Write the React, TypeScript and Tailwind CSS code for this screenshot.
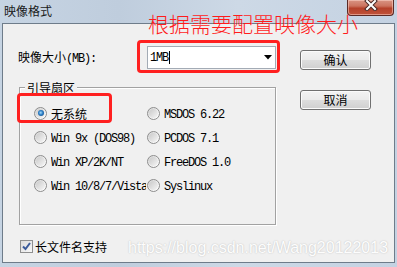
import React from "react";

function T({ s }: { s: string }) {
  const parts = s.match(/[\x00-\x7f]+|[^\x00-\x7f]+/g) || [];
  return (
    <>
      {parts.map((p, i) =>
        /^[\x00-\x7f]/.test(p) ? (
          <span key={i} className="font-['Liberation_Mono'] text-[12px] tracking-[-1.2px] whitespace-pre">
            {p}
          </span>
        ) : (
          <span key={i} className="font-['Noto_Sans_CJK_SC'] text-[12px]">
            {p}
          </span>
        )
      )}
    </>
  );
}

function Radio({ checked }: { checked?: boolean }) {
  return (
    <div className="w-[13px] h-[13px] shrink-0 rounded-full border border-[#8d8d8d] bg-[linear-gradient(135deg,#d4d4d4,#f4f4f4_60%,#ffffff)] flex items-center justify-center">
      <div className="w-[9px] h-[9px] rounded-full bg-[linear-gradient(135deg,#c9c9c9,#f6f6f6)] flex items-center justify-center">
        {checked && (
          <div className="w-[6px] h-[6px] rounded-full bg-[radial-gradient(circle_at_45%_45%,#a6dcfa_0%,#2a7cc4_45%,#0b3f75_100%)]" />
        )}
      </div>
    </div>
  );
}

function RadioItem({ label, checked, w, tw }: { label: string; checked?: boolean; w: string; tw: string }) {
  return (
    <div className={`flex items-center h-[24px] ${w} whitespace-nowrap`}>
      <Radio checked={checked} />
      <div className={`ml-[4px] leading-[14px] text-black overflow-hidden ${tw}`}>
        <T s={label} />
      </div>
    </div>
  );
}

function Button({ label }: { label: string }) {
  return (
    <div className="w-[71px] h-[20px] rounded-[3px] border border-[#707070] shadow-[inset_0_0_0_1px_#fbfbfb] bg-[linear-gradient(#f3f3f3_0%,#ebebeb_48%,#dddddd_52%,#cfcfcf_100%)] flex items-center justify-center leading-[14px] text-black">
      <T s={label} />
    </div>
  );
}

export default function App() {
  return (
    <div className="relative w-[397px] h-[267px] overflow-hidden bg-[linear-gradient(90deg,#c6d4e3,#bfcddd_30%,#cdd9e6_60%,#c4d2e2)]">
      {/* Title bar */}
      <div className="h-[23px] flex items-start justify-between">
        <div className="pt-[3px] pl-[4px] leading-[14px] text-[#1a1a1a]">
          <span className="font-['Noto_Sans_CJK_SC'] text-[12px]">映像格式</span>
        </div>
        <div className="mr-[3px] w-[47px] h-[16px] rounded-b-[4px] border border-t-0 border-[#5b2b26] shadow-[inset_0_0_0_1px_rgba(255,220,210,0.5)] bg-[linear-gradient(#d99484_0%,#cc735f_40%,#b5412b_55%,#c0533a_100%)] flex items-start justify-center">
          <svg width="14" height="11" viewBox="0 0 14 11">
            <path d="M3 1 L11 9 M11 1 L3 9" stroke="#4a2a28" strokeWidth="4" strokeLinecap="square" />
            <path d="M3 1 L11 9 M11 1 L3 9" stroke="#ffffff" strokeWidth="2" strokeLinecap="square" />
          </svg>
        </div>
      </div>

      {/* Client area */}
      <div className="ml-[2px] w-[393px] h-[240px] border border-[#6e7c8a] bg-[#f0f0f0] flex">
        {/* Left column */}
        <div className="w-[274px] flex flex-col">
          <div className="mt-[22px] h-[23px] flex items-center">
            <div className="w-[144px] pl-[15px] leading-[14px] text-black">
              <T s="映像大小(MB):" />
            </div>
            <div className="w-[129px] h-[23px] border border-[#a3abb5] bg-white flex items-center pl-[2px] pr-[3px]">
              <div className="leading-[14px] text-black flex items-center">
                <T s="1MB" />
                <div className="ml-[1px] w-[1px] h-[13px] bg-black" />
              </div>
              <div className="flex-1" />
              <svg width="8" height="5" viewBox="0 0 8 5">
                <path d="M0 0 H8 L4 4.5 Z" fill="#000" />
              </svg>
            </div>
          </div>

          {/* Group box */}
          <div className="relative mt-[18px] ml-[16px] w-[257px] h-[138px] border border-[#a2a2a2] shadow-[1px_1px_0_#ffffff,inset_1px_1px_0_#ffffff] pt-[13px] pl-[14px]">
            <div className="absolute left-[5px] top-[-8px] px-[2px] bg-[#f0f0f0] leading-[14px] text-black">
              <T s="引导扇区" />
            </div>
            <div className="flex">
              <RadioItem label="无系统" checked w="w-[113px]" tw="w-[95px]" />
              <RadioItem label="MSDOS 6.22" w="w-[110px]" tw="w-[93px]" />
            </div>
            <div className="flex">
              <RadioItem label="Win 9x (DOS98)" w="w-[113px]" tw="w-[95px]" />
              <RadioItem label="PCDOS 7.1" w="w-[110px]" tw="w-[93px]" />
            </div>
            <div className="flex">
              <RadioItem label="Win XP/2K/NT" w="w-[113px]" tw="w-[95px]" />
              <RadioItem label="FreeDOS 1.0" w="w-[110px]" tw="w-[93px]" />
            </div>
            <div className="flex">
              <RadioItem label="Win 10/8/7/Vista" w="w-[113px]" tw="w-[95px]" />
              <RadioItem label="Syslinux" w="w-[110px]" tw="w-[93px]" />
            </div>
          </div>

          {/* Checkbox */}
          <div className="mt-[15px] ml-[17px] h-[13px] flex items-center">
            <div className="w-[13px] h-[13px] border border-[#8e8f8f] bg-[linear-gradient(135deg,#dcdcdc,#f8f8f8)] flex items-center justify-center">
              <svg width="9" height="9" viewBox="0 0 9 9">
                <path d="M1 4.5 L3.5 7 L8 1" stroke="#3a5a9a" strokeWidth="2" fill="none" />
              </svg>
            </div>
            <div className="ml-[2px] leading-[14px] text-black">
              <T s="长文件名支持" />
            </div>
          </div>
        </div>

        {/* Right column */}
        <div className="ml-[23px] flex flex-col">
          <div className="mt-[26px]">
            <Button label="确认" />
          </div>
          <div className="mt-[20px]">
            <Button label="取消" />
          </div>
        </div>
      </div>

      {/* Annotations overlay */}
      <div className="absolute left-[148px] top-[13px] leading-[21px] text-[21px] text-[#ff1c1c] font-['Noto_Sans_CJK_SC'] font-light whitespace-nowrap">
        根据需要配置映像大小
      </div>
      <div className="absolute left-[137px] top-[40px] w-[143px] h-[33px] border-[3px] border-[#ff2020] rounded-[4px]" />
      <div className="absolute left-[17px] top-[93px] w-[95px] h-[30px] border-[3px] border-[#ff2020] rounded-[4px]" />

      {/* Watermark */}
      <div className="absolute left-[128px] top-[240px] leading-[16px] text-[16px] font-['Liberation_Sans'] text-[#fdfdfd] [text-shadow:0_0_1.5px_#b4b4b4] whitespace-nowrap">
        https://blog.csdn.net/Wang20122013
      </div>
    </div>
  );
}
